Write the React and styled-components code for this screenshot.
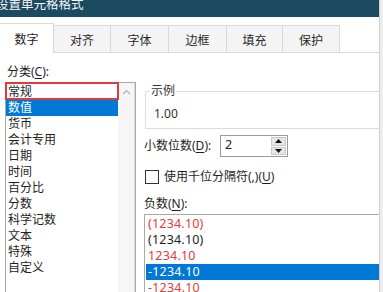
import React from 'react'
import styled, { createGlobalStyle } from 'styled-components'

const GlobalStyle = createGlobalStyle`
  html, body {
    margin: 0;
    padding: 0;
    background: #ffffff;
  }
  body {
    font-family: "Noto Sans", "Noto Sans CJK SC", sans-serif;
    font-size: 12px;
    color: #1e1e1e;
  }
`

const Screen = styled.div`
  display: flex;
  width: 383px;
  height: 292px;
  overflow: hidden;
`

const Window = styled.div`
  flex: 1;
  display: flex;
  flex-direction: column;
  min-width: 0;
  background: #fff;
`

const WindowEdge = styled.div`
  width: 3px;
  background: #ededed;
  border-left: 1px solid #cfcfcf;
`

const TitleBar = styled.div`
  height: 17px;
  flex: none;
  background: #1c4a60;
  color: #f4f7f9;
  overflow: hidden;
  display: flex;
  align-items: flex-start;
`

const Title = styled.span`
  margin: -2px 0 0 -4px;
  line-height: 14px;
  font-size: 12.5px;
  white-space: nowrap;
`

const TabStrip = styled.div`
  display: flex;
  height: 27px;
  margin-top: 8px;
  border-bottom: 1px solid #d9d9d9;
  flex: none;
`

const Tab = styled.div`
  width: ${p => p.$w}px;
  box-sizing: border-box;
  display: flex;
  align-items: center;
  justify-content: center;
  font-size: 12px;
  color: ${p => (p.$active ? '#1e1e1e' : '#2a2a2a')};
  border-right: 1px solid #d9d9d9;
  border-top: 1px solid #d9d9d9;
  background: ${p => (p.$active ? '#ffffff' : '#f4f4f4')};
  height: ${p => (p.$active ? '30px' : '27px')};
  margin-top: ${p => (p.$active ? '-2px' : '0')};
  position: relative;
  z-index: ${p => (p.$active ? 1 : 0)};
  padding-top: ${p => (p.$active ? '0' : '1px')};
`

const Panel = styled.div`
  display: flex;
  padding-left: 5px;
  flex: 1;
  min-height: 0;
`

const LeftColumn = styled.div`
  width: 131px;
  flex: none;
  display: flex;
  flex-direction: column;
`

const RightColumn = styled.div`
  flex: 1;
  margin-left: 8px;
  display: flex;
  flex-direction: column;
  min-width: 0;
`

const FieldLabel = styled.div`
  line-height: 16px;
  padding-left: ${p => p.$indent || 0}px;
  margin-top: ${p => p.$top || 0}px;
  white-space: nowrap;
  u {
    text-decoration: underline;
    text-underline-offset: 2px;
  }
`

const CategoryBox = styled.div`
  margin-top: 2px;
  flex: 1;
  display: flex;
  border: 1px solid #a9a9a9;
  border-bottom: none;
`

const Items = styled.div`
  flex: 1;
  display: flex;
  flex-direction: column;
  padding-top: 1px;
`

const Item = styled.div`
  height: 16px;
  line-height: 16px;
  padding-left: 2px;
  white-space: nowrap;
  position: relative;
  background: ${p => (p.$selected ? '#0078d7' : 'transparent')};
  color: ${p => (p.$selected ? '#ffffff' : p.$red ? '#e23b3b' : '#1e1e1e')};

  ${p =>
    p.$focus &&
    `
    &::after {
      content: '';
      position: absolute;
      inset: -2px -1px 0 -1px;
      border: 2px solid #e03a3e;
    }
  `}
`

const ScrollTrack = styled.div`
  width: 17px;
  background: #f6f6f6;
  border-right: 1px solid #dcdcdc;
  display: flex;
  justify-content: center;
  padding-top: 6px;
  box-sizing: border-box;
`

const SampleGroup = styled.fieldset`
  margin: 30px 0 0 1px;
  padding: 7px 0 6px 4px;
  border: 1px solid #dcdcdc;
  border-right: none;
  min-width: 0;
`

const SampleLegend = styled.legend`
  padding: 0 1px;
  line-height: 16px;
  color: #333;
`

const SampleValue = styled.div`
  line-height: 16px;
  padding-left: 4px;
  color: #333;
`

const SpinRow = styled.div`
  display: flex;
  align-items: center;
  margin-top: 6px;
  height: 22px;
`

const SpinLabel = styled(FieldLabel)`
  width: 76px;
`

const SpinBox = styled.div`
  width: 68px;
  height: 22px;
  box-sizing: border-box;
  border: 1px solid #9a9a9a;
  display: flex;
`

const SpinValue = styled.div`
  flex: 1;
  padding-left: 4px;
  line-height: 18px;
  font-size: 12.5px;
`

const SpinButtons = styled.div`
  width: 15px;
  display: flex;
  flex-direction: column;
  gap: 1px;
  padding: 1px 1px 1px 0;
`

const SpinButton = styled.div`
  flex: 1;
  background: #e6e6e6;
  border: 1px solid #c9c9c9;
  display: flex;
  align-items: center;
  justify-content: center;
`

const CheckRow = styled.div`
  display: flex;
  align-items: center;
  margin-top: 12px;
  height: 16px;
  gap: 5px;
  padding-left: 1px;
`

const CheckBox = styled.div`
  width: 12px;
  height: 12px;
  border: 1px solid #333;
  background: #fff;
`

const NegativeBox = styled.div`
  margin-top: 2px;
  flex: 1;
  border: 1px solid #a9a9a9;
  border-right: none;
  border-bottom: none;
  padding: 1px 0 0 1px;
`

const NumberItem = styled(Item)`
  font-size: 12.5px;
  letter-spacing: 0.2px;
`

const Chevron = () => (
  <svg width="9" height="6" viewBox="0 0 9 6">
    <path d="M1 5 L4.5 1.5 L8 5" fill="none" stroke="#b4b4b4" strokeWidth="1.2" />
  </svg>
)

const Triangle = ({ down }) => (
  <svg width="7" height="4" viewBox="0 0 7 4">
    <path d={down ? 'M0 0 H7 L3.5 4 Z' : 'M0 4 H7 L3.5 0 Z'} fill="#111" />
  </svg>
)

const tabs = [
  { label: '数字', w: 54 },
  { label: '对齐', w: 57 },
  { label: '字体', w: 58 },
  { label: '边框', w: 58 },
  { label: '填充', w: 56 },
  { label: '保护', w: 57 },
]

const categories = ['常规', '数值', '货币', '会计专用', '日期', '时间', '百分比', '分数', '科学记数', '文本', '特殊', '自定义']

const negatives = [
  { text: '(1234.10)', red: true },
  { text: '(1234.10)' },
  { text: '1234.10', red: true },
  { text: '-1234.10', selected: true },
  { text: '-1234.10', red: true },
]

export default function App() {
  return (
    <Screen>
      <GlobalStyle />
      <Window>
        <TitleBar>
          <Title>设置单元格格式</Title>
        </TitleBar>
        <TabStrip>
          {tabs.map((t, i) => (
            <Tab key={t.label} $w={t.w} $active={i === 0}>
              {t.label}
            </Tab>
          ))}
        </TabStrip>
        <Panel>
          <LeftColumn>
            <FieldLabel $indent={2} $top={11}>
              分类(<u>C</u>):
            </FieldLabel>
            <CategoryBox>
              <Items>
                {categories.map((c, i) => (
                  <Item key={c} $focus={i === 0} $selected={i === 1}>
                    {c}
                  </Item>
                ))}
              </Items>
              <ScrollTrack>
                <Chevron />
              </ScrollTrack>
            </CategoryBox>
          </LeftColumn>
          <RightColumn>
            <SampleGroup>
              <SampleLegend>示例</SampleLegend>
              <SampleValue>1.00</SampleValue>
            </SampleGroup>
            <SpinRow>
              <SpinLabel>
                小数位数(<u>D</u>):
              </SpinLabel>
              <SpinBox>
                <SpinValue>2</SpinValue>
                <SpinButtons>
                  <SpinButton>
                    <Triangle />
                  </SpinButton>
                  <SpinButton>
                    <Triangle down />
                  </SpinButton>
                </SpinButtons>
              </SpinBox>
            </SpinRow>
            <CheckRow>
              <CheckBox />
              <FieldLabel>
                使用千位分隔符(,)(<u>U</u>)
              </FieldLabel>
            </CheckRow>
            <FieldLabel $top={11}>
              负数(<u>N</u>):
            </FieldLabel>
            <NegativeBox>
              {negatives.map((n, i) => (
                <NumberItem key={i} $red={n.red} $selected={n.selected}>
                  {n.text}
                </NumberItem>
              ))}
            </NegativeBox>
          </RightColumn>
        </Panel>
      </Window>
      <WindowEdge />
    </Screen>
  )
}
